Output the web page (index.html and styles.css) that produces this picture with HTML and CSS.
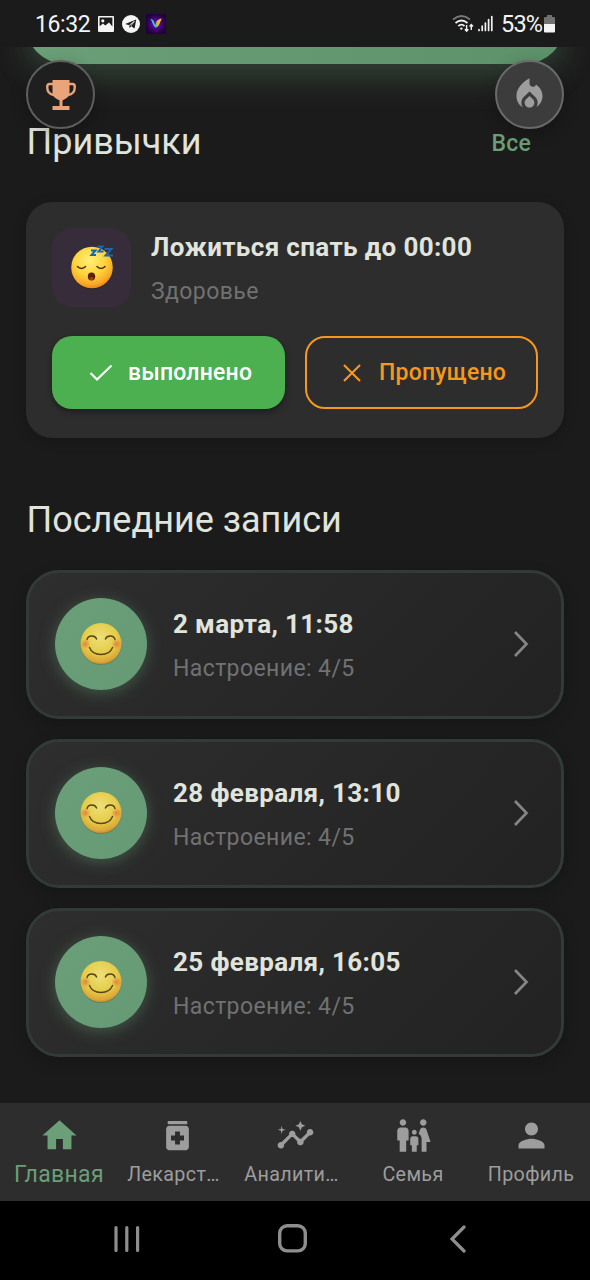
FILE: index.html
```html
<!DOCTYPE html>
<html lang="ru">
<head>
<meta charset="utf-8">
<title>Привычки</title>
<link rel="stylesheet" href="styles.css">
</head>
<body>
<svg class="defs" width="0" height="0" aria-hidden="true">
  <defs>
    <radialGradient id="face" cx="45%" cy="32%" r="70%">
      <stop offset="0" stop-color="#fff07a"/><stop offset=".55" stop-color="#fed23a"/><stop offset=".85" stop-color="#f9a825"/><stop offset="1" stop-color="#e87c14"/>
    </radialGradient>
    <radialGradient id="smile-face" cx="48%" cy="35%" r="68%">
      <stop offset="0" stop-color="#eee078"/><stop offset=".6" stop-color="#e4cb48"/><stop offset=".88" stop-color="#dca638"/><stop offset="1" stop-color="#bb7c2c"/>
    </radialGradient>
    <radialGradient id="cheek">
      <stop offset="0" stop-color="#e2703c" stop-opacity=".8"/><stop offset="1" stop-color="#e2703c" stop-opacity="0"/>
    </radialGradient>
    <radialGradient id="app">
      <stop offset="0" stop-color="#6a12b8"/><stop offset="1" stop-color="#22003f"/>
    </radialGradient>
    <symbol id="smile" viewBox="0 0 44 44">
      <circle cx="22" cy="22.400" r="20.600" fill="#5b6a3a" opacity=".45"/>
      <circle cx="22" cy="21.500" r="20.500" fill="url(#smile-face)"/>
      <circle cx="6.500" cy="22" r="5" fill="url(#cheek)"/><circle cx="37.500" cy="22" r="5" fill="url(#cheek)"/>
      <path d="M8 17.500c1.200-4.600 8-4.600 9.600-.5M26.400 17c1.600-4.100 8.400-4.100 9.600.5M10.500 25.500c3.500 9.300 19.500 9.300 23 0" fill="none" stroke="#5a4417" stroke-width="1.400" stroke-linecap="round"/>
    </symbol>
    <symbol id="chevron" viewBox="0 0 16 28"><path d="M2 2l11.500 12L2 26" fill="none" stroke="#858585" stroke-width="2.700"/></symbol>
  </defs>
</svg>
<div class="phone">
  <header class="status">
    <span class="clock">16:32</span>
    <svg class="st-img" viewBox="0 0 16 16"><path fill="#f4f4f4" fill-rule="evenodd" d="M1 0h14a1 1 0 0 1 1 1v14a1 1 0 0 1-1 1H1a1 1 0 0 1-1-1V1a1 1 0 0 1 1-1zm.6 1.600v8.700L5 7.500l2.300 2L11 6.500l3.400 4V1.600zM4.800 3.200a1.600 1.600 0 1 1 0 3.200 1.600 1.600 0 0 1 0-3.200z"/></svg>
    <svg class="st-tg" viewBox="0 0 18 18"><circle cx="9" cy="9" r="9" fill="#f4f4f4"/><path fill="#1b1b1b" d="M3.200 9L14.200 4.500 12.600 13.500 9.200 11.300 7.600 13 7.200 10.200z"/><path d="M7.300 10.200L12.300 6.300 8.800 11" fill="none" stroke="#f4f4f4" stroke-width=".8"/></svg>
    <svg class="st-app" viewBox="0 0 20 20"><rect width="20" height="20" fill="url(#app)"/><path d="M4.300 5c2.200 0 3.600 1.200 4 3.500l1.700 5C6.700 12.800 6.500 7 4.300 5z" fill="#45b4f2"/><path d="M16 4.500c-3.500.3-5.500 1.800-6 4.800l-.3 4.200c3.800-.8 4-5.500 6.300-9z" fill="#f6b52e"/><path d="M9.500 13.500c-.6-2.700 0-4.500 2-6l.5 3.500z" fill="#78d065"/></svg>
    <span class="spacer"></span>
    <svg class="st-wifi" viewBox="0 0 22 18" fill="none" stroke-width="1.700">
      <path d="M1 4.500Q9.500-2.500 18 4.500" stroke="#7a7a7a"/>
      <path d="M3.500 8Q9.500 3 15.500 8M6.300 11Q9.500 8.300 12.500 11" stroke="#f2f2f2"/>
      <circle cx="9.300" cy="13.600" r="1.200" fill="#f2f2f2"/>
      <path d="M14.600 10v6M12.900 14.200l1.700 2 1.700-2M19.300 15V9.500M17.600 11.500l1.700-2 1.700 2" stroke="#f2f2f2" stroke-width="1.400"/>
    </svg>
    <svg class="st-sig" viewBox="0 0 15 17" stroke="#f2f2f2" stroke-width="1.700" stroke-linecap="round"><path d="M1 14.500v1M4.200 11.200v4.300M7.400 8v7.500M10.600 4.500v11M13.800 1.500v14"/></svg>
    <span class="pct">53%</span>
    <svg class="st-bat" viewBox="0 0 11 18"><path d="M3 0h5v2h2a1 1 0 0 1 1 1v6H0V3a1 1 0 0 1 1-1h2z" fill="#717171"/><path d="M0 9h11v7.500a1 1 0 0 1-1 1H1a1 1 0 0 1-1-1z" fill="#f4f4f4"/></svg>
  </header>

  <main class="content">
    <div class="promo"></div>
    <div class="section-head">
      <h2>Привычки</h2><a class="all">Все</a>
    </div>
    <section class="habit">
      <div class="habit-top">
        <div class="habit-icon">
          <svg width="46" height="46" viewBox="0 0 46 46">
            <circle cx="23" cy="23.500" r="20.800" fill="#1f1620" opacity=".5"/>
            <circle cx="23" cy="22.500" r="20.800" fill="url(#face)"/>
            <path d="M8.500 21.500c2 2.500 6 2.500 8 0M28 21.500c2 2.500 6 2.500 8 0" fill="none" stroke="#4f2c12" stroke-width="1.500" stroke-linecap="round"/>
            <ellipse cx="22.500" cy="31.500" rx="3.700" ry="4" fill="#5b2108"/><ellipse cx="22.500" cy="33.500" rx="2.200" ry="1.500" fill="#9b3a1c"/>
            <path d="M22 5.500h4.500l-4 4.500H27M28.500 1.500h5l-4 5h5M35.500 4h7l-6 6.500H44" fill="none" stroke="#1668b0" stroke-width="2"/>
          </svg>
        </div>
        <div class="habit-text">
          <h3>Ложиться спать до 00:00</h3>
          <p>Здоровье</p>
        </div>
      </div>
      <div class="actions">
        <button class="btn done"><svg width="24" height="20" viewBox="0 0 24 20"><path d="M1.500 10l6.500 6.500L22.500 2.500" fill="none" stroke="#fff" stroke-width="2.200"/></svg><span>выполнено</span></button>
        <button class="btn skip"><svg width="18" height="18" viewBox="0 0 18 18"><path d="M1 1l16 16M17 1L1 17" stroke="#f7981d" stroke-width="2.100"/></svg><span>Пропущено</span></button>
      </div>
    </section>
    <h2 class="recent-title">Последние записи</h2>
    <section class="entries">
      <article class="entry">
        <div class="mood"><svg><use href="#smile"/></svg></div>
        <div class="entry-text"><h3>2 марта, 11:58</h3><p>Настроение: 4/5</p></div>
        <svg class="chev"><use href="#chevron"/></svg>
      </article>
      <article class="entry">
        <div class="mood"><svg><use href="#smile"/></svg></div>
        <div class="entry-text"><h3>28 февраля, 13:10</h3><p>Настроение: 4/5</p></div>
        <svg class="chev"><use href="#chevron"/></svg>
      </article>
      <article class="entry">
        <div class="mood"><svg><use href="#smile"/></svg></div>
        <div class="entry-text"><h3>25 февраля, 16:05</h3><p>Настроение: 4/5</p></div>
        <svg class="chev"><use href="#chevron"/></svg>
      </article>
    </section>
    <div class="fab trophy">
      <svg width="30" height="30" viewBox="0 0 30 30"><path fill="#e9a47a" d="M6.500 0h17v13.500c0 3-3.500 5.500-7 6.700V26H23.500v4h-17v-4h7v-5.800c-3.500-1.200-7-3.700-7-6.700z"/><path d="M7 4H3.500Q1.200 4 1.200 7c0 4.500 2.500 7.500 7 8M23 4h3.500q2.300 0 2.300 3c0 4.500-2.500 7.500-7 8" fill="none" stroke="#e9a47a" stroke-width="2.400"/></svg>
    </div>
    <div class="fab fire">
      <svg width="39" height="39" viewBox="0 0 24 24" fill="#9d9d9d"><path d="M12 12.900l-2.130 2.090C9.310 15.550 9 16.280 9 17.060 9 18.680 10.350 20 12 20s3-1.320 3-2.940c0-.78-.31-1.520-.87-2.070L12 12.900z"/><path d="M16 6l-.44.55C14.380 8.020 12 7.190 12 5.300V2S4 6 4 13c0 2.920 1.560 5.470 3.890 6.860-.56-.79-.89-1.760-.89-2.800 0-1.320.52-2.560 1.470-3.500L12 10.100l3.530 3.470c.95.93 1.470 2.170 1.470 3.500 0 1.020-.31 1.960-.85 2.750 1.890-1.150 3.290-3.060 3.710-5.300.66-3.550-1.070-6.900-3.860-8.520z"/></svg>
    </div>
  </main>

  <nav class="tabs">
    <a class="tab active"><svg viewBox="0 0 24 24"><path d="M10 20v-6h4v6h5v-8h3L12 3 2 12h3v8z"/></svg><span>Главная</span></a>
    <a class="tab cut"><svg viewBox="0 0 24 24"><path d="M6 3h12v2H6zM17 6H7c-1.100 0-2 .9-2 2v11c0 1.100.9 2 2 2h10c1.100 0 2-.9 2-2V8c0-1.100-.9-2-2-2zm-1 9h-2.500v2.500h-3V15H8v-3h2.500V9.500h3V12H16v3z"/></svg><span>Лекарст…</span></a>
    <a class="tab cut"><svg viewBox="0 0 24 24"><path d="M21 8c-1.450 0-2.260 1.440-1.930 2.510l-3.550 3.560c-.3-.09-.74-.09-1.040 0l-2.550-2.550C12.270 10.450 11.460 9 10 9c-1.450 0-2.270 1.440-1.930 2.520l-4.560 4.550C2.440 15.740 1 16.550 1 18c0 1.100.9 2 2 2 1.450 0 2.260-1.440 1.930-2.510l4.550-4.560c.3.09.74.09 1.040 0l2.550 2.550C12.730 16.550 13.540 18 15 18c1.450 0 2.270-1.440 1.930-2.520l3.560-3.550C21.560 12.260 23 11.450 23 10c0-1.100-.9-2-2-2zM15 9l.94-2.070L18 6l-2.060-.93L15 3l-.92 2.070L12 6l2.080.93zM3.500 11L4 9l2-.5L4 8l-.5-2L3 8l-2 .5L3 9z"/></svg><span>Аналити…</span></a>
    <a class="tab"><svg viewBox="0 0 24 24"><path d="M16 4c0-1.110.89-2 2-2s2 .89 2 2-.89 2-2 2-2-.89-2-2zm4 18v-6h2.500l-2.540-7.630C19.680 7.550 18.920 7 18.060 7h-.12c-.86 0-1.630.55-1.900 1.370l-.86 2.580c1.080.6 1.820 1.730 1.820 3.050v8h3zm-7.500-10.500c.83 0 1.500-.67 1.500-1.500s-.67-1.500-1.500-1.500S11 9.170 11 10s.67 1.500 1.500 1.500zM5.500 6c1.110 0 2-.89 2-2s-.89-2-2-2-2 .89-2 2 .89 2 2 2zm2 16v-7H9V9c0-1.100-.9-2-2-2H4c-1.100 0-2 .9-2 2v6h1.500v7h4zm6.500 0v-4h1v-4c0-.82-.68-1.500-1.500-1.500h-2c-.82 0-1.500.68-1.500 1.500v4h1v4h3z"/></svg><span>Семья</span></a>
    <a class="tab"><svg viewBox="0 0 24 24"><path d="M12 12c2.210 0 4-1.790 4-4s-1.790-4-4-4-4 1.790-4 4 1.790 4 4 4zm0 2c-2.670 0-8 1.340-8 4v2h16v-2c0-2.660-5.330-4-8-4z"/></svg><span>Профиль</span></a>
  </nav>
  <footer class="system">
    <svg width="26" height="28" viewBox="0 0 26 28" stroke="#8e8e8e" stroke-width="3.200" stroke-linecap="round"><path d="M2 2.500v23M12.800 2.500v23M23.600 2.500v23"/></svg>
    <svg class="home-key" width="29" height="29" viewBox="0 0 29 29"><rect x="1.700" y="1.700" width="25.600" height="25.200" rx="7.500" fill="none" stroke="#8e8e8e" stroke-width="3.400"/></svg>
    <svg width="16" height="28" viewBox="0 0 16 28"><path d="M14 2L2 14l12 12" fill="none" stroke="#8e8e8e" stroke-width="3.200" stroke-linecap="round"/></svg>
  </footer>
</div>
</body>
</html>
```
FILE: styles.css
```css
* { box-sizing: border-box; }
body { margin: 0; background: #1b1b1b; font-family: Roboto, "Noto Sans", sans-serif; }
h2, h3, p { margin: 0; }
svg { display: block; flex: none; }
.defs { position: absolute; }
.phone { width: 590px; height: 1280px; display: flex; flex-direction: column; overflow: hidden; background: #1b1b1b; }

.status { height: 47px; flex: none; display: flex; align-items: center; padding: 0 35px; color: #f4f4f4; }
.clock, .pct { font-size: 23px; line-height: 27px; padding-top: 2px; letter-spacing: -0.4px; }
.clock { width: 63px; }
.pct { width: 43px; letter-spacing: -0.8px; font-size: 23.500px; }
.spacer { flex: 1; }
.st-img { width: 16px; height: 16px; }
.st-tg { width: 18px; height: 18px; margin-left: 8px; }
.st-app { width: 20px; height: 20px; margin-left: 6px; }
.st-wifi { width: 22px; height: 18px; margin-right: 4px; }
.st-sig { width: 15px; height: 17px; margin-right: 8px; }
.st-bat { width: 11px; height: 18px; }

.content { position: relative; flex: 1; overflow: hidden; padding: 0 26px; display: flex; flex-direction: column; }
.promo { height: 80px; margin-top: -63px; flex: none; border-radius: 39px; background: linear-gradient(90deg, #6a9f78, #5c9169); box-shadow: 0 13px 33px rgba(106, 159, 120, .3); }
.section-head { display: flex; justify-content: space-between; align-items: center; height: 58px; margin-top: 49px; padding-right: 33px; }
h2 { font-size: 36px; line-height: 46px; font-weight: 400; color: #e0e4dc; letter-spacing: 0; white-space: nowrap; padding-left: .5px; }
.all { font-size: 23px; font-weight: 500; color: #6a9f78; letter-spacing: .2px; padding-top: 2px; }

.habit { height: 236px; margin-top: 31px; flex: none; padding: 26px; border-radius: 26px; background: #2d2d2d; box-shadow: 0 3px 13px rgba(0, 0, 0, .2); }
.habit-top { display: flex; gap: 20px; height: 79px; }
.habit-icon { width: 79px; height: 79px; border-radius: 20px; background: #372c39; display: grid; place-items: center; }
h3 { font-size: 26px; line-height: 39px; font-weight: 700; color: #e0e4dc; letter-spacing: .36px; white-space: nowrap; }
p { font-size: 23px; line-height: 33px; color: #717171; letter-spacing: .4px; }
.habit-text p { margin-top: 8px; }
.actions { display: grid; grid-template-columns: 1fr 1fr; gap: 20px; margin-top: 29px; }
.btn { height: 73px; border: 0; border-radius: 20px; display: flex; align-items: center; font: 500 23px/30px Roboto, sans-serif; letter-spacing: .2px; }
.btn span { padding-top: 1px; }
.done { background: #4caf50; color: #fff; gap: 15px; padding: 0 0 0 37px; box-shadow: 0 3px 6px rgba(0, 0, 0, .35); }
.skip { background: none; border: 2px solid #f7981d; color: #f7981d; gap: 18px; padding: 0 0 0 36px; }

.recent-title { margin-top: 59px; }
.entries { display: flex; flex-direction: column; gap: 20px; margin-top: 27px; }
.entry { height: 149px; flex: none; display: flex; align-items: center; border: 3px solid #323b35; border-radius: 33px; padding: 0 31px 2px 26px; background: linear-gradient(135deg, #2e2e2e, #222) border-box; box-shadow: 0 5px 16px rgba(0, 0, 0, .2); }
.mood { width: 92px; height: 92px; flex: none; border-radius: 50%; background: linear-gradient(135deg, #6a9f78, #669a75); display: grid; place-items: center; box-shadow: 0 3px 16px rgba(106, 159, 120, .4); }
.mood svg { width: 44px; height: 44px; }
.entry-text { flex: 1; margin-left: 26px; padding-top: 2px; }
.entry-text h3 { line-height: 38px; }
.entry-text p { margin-top: 9px; line-height: 33px; }
.chev { width: 18px; height: 28px; }

.fab { position: absolute; top: 13px; width: 69px; height: 69px; border-radius: 50%; border: 2px solid #5e5e5e; display: grid; place-items: center; box-shadow: 0 5px 16px rgba(0, 0, 0, .25); }
.trophy { left: 26px; background: #1f1f1f; }
.fire { right: 26px; background: #3c3c3c; border-color: #6a6a6a; }

.tabs { height: 98px; flex: none; display: grid; grid-template-columns: repeat(5, 1fr); background: #2d2d2d; }
.tab { display: flex; flex-direction: column; align-items: center; padding-top: 13px; color: #9d9d9d; font-size: 19.700px; letter-spacing: .35px; }
.tab svg { width: 39px; height: 39px; fill: currentColor; }
.tab span { line-height: 28px; margin-top: 6px; white-space: nowrap; }
.cut span { padding-right: 7px; }
.active { color: #6a9f78; font-size: 23px; padding-top: 12px; }
.active svg { width: 41px; height: 41px; }
.active span { margin-top: 5px; }
.system { height: 79px; flex: none; background: #000; display: flex; justify-content: space-between; align-items: center; padding: 0 124px 4px 114px; }
.home-key { margin-right: 6px; }
```
